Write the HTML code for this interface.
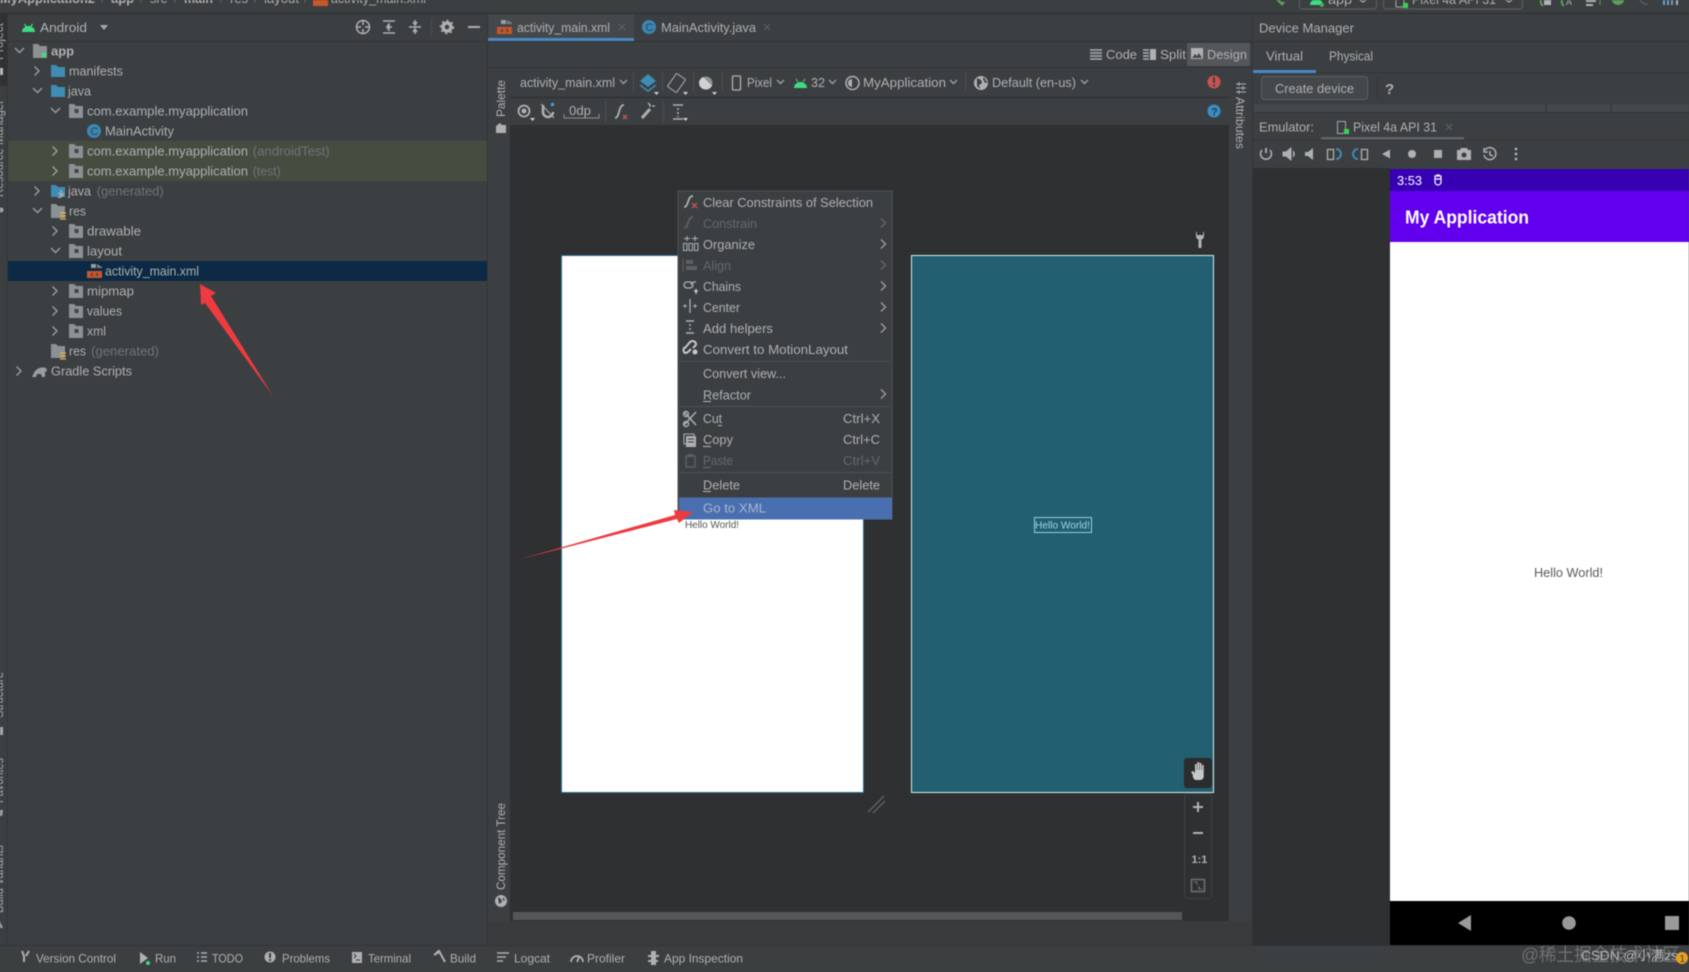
<!DOCTYPE html>
<html lang="en"><head><meta charset="utf-8"><title>Android Studio</title>
<style>
html,body{margin:0;padding:0;background:#3c3f41;width:1689px;height:972px;overflow:hidden}
svg{display:block;filter:blur(.45px)}
text{font-family:"Liberation Sans","Noto Sans CJK SC",sans-serif;font-size:13px;fill:#aeb0b2}
.d{fill:#66696b}.g{fill:#70737a}.b{font-weight:bold}
.c{fill:none;stroke:#9b9d9f;stroke-width:1.4}
.i{fill:none;stroke:#aeb0b2;stroke-width:1.5}
.s{stroke:#323436;stroke-width:1}
</style></head><body>
<svg width="1689" height="972" viewBox="0 0 1689 972" xmlns="http://www.w3.org/2000/svg">
<defs>
<path id="cr" d="M0-4.500l4.500 4.500-4.500 4.500" class="c"/>
<path id="cd" d="M-4.500-2l4.500 4.500 4.500-4.500" class="c"/>
<g id="pk"><path d="M0 0h5l2 2h7v12H0z" fill="#8c9193"/><rect x="5.500" y="5" width="4" height="4" fill="#44474a"/></g>
<g id="bf"><path d="M0 0h5l2 2h7v10H0z" fill="#3f8cb4"/></g>
<g id="gf"><path d="M0 0h5l2 2h7v12H0z" fill="#8c9193"/></g>
<g id="ci"><circle cx="7" cy="7" r="7" fill="#3d86b0"/><text x="3.500" y="11" style="font-size:11px;fill:#1f4a63">C</text></g>
<g id="xm"><path d="M4 0h5v4H4z" fill="#9a9d9f"/><path d="M10 0v4h5v-1z" fill="#7c7f81"/><rect y="7" width="15" height="7" fill="#c8572b"/><path d="M6 9l-2 1.500 2 1.500M9 9l2 1.500-2 1.500" stroke="#3c3f41" fill="none"/></g>
<g id="an"><path d="M0 9a6.500 6 0 0 1 13 0z" fill="#3ddc84"/><path d="M2.500 1l2 3M10.500 1l-2 3" stroke="#3ddc84" stroke-width="1.200"/></g>
</defs>

<rect width="1689" height="972" fill="#3c3f41"/>

<!-- breadcrumbs -->
<rect y="13" width="1689" height="1" fill="#2b2d2e"/>
<text x="0" y="3" class="b" textLength="95" lengthAdjust="spacingAndGlyphs">MyApplication2</text>
<text x="101" y="3" class="d">/</text>
<text x="111" y="3" class="b" textLength="23" lengthAdjust="spacingAndGlyphs">app</text>
<text x="140" y="3" class="d">/</text>
<text x="150" y="3" textLength="17" lengthAdjust="spacingAndGlyphs">src</text>
<text x="174" y="3" class="d">/</text>
<text x="184" y="3" class="b" textLength="29" lengthAdjust="spacingAndGlyphs">main</text>
<text x="220" y="3" class="d">/</text>
<text x="230" y="3" textLength="18" lengthAdjust="spacingAndGlyphs">res</text>
<text x="254" y="3" class="d">/</text>
<text x="264" y="3" textLength="35" lengthAdjust="spacingAndGlyphs">layout</text>
<text x="304" y="3" class="d">/</text>
<rect x="313" y="0" width="15" height="6" fill="#c8572b"/>
<text x="331" y="3" textLength="95" lengthAdjust="spacingAndGlyphs">activity_main.xml</text>

<!-- top-right run toolbar -->
<path d="M1276-2l6 6 2-2" stroke="#5c9e5c" stroke-width="2.500" fill="none"/>
<rect x="1299.500" y="-8" width="77" height="17" rx="3" fill="none" stroke="#5e6163"/>
<path d="M1310 5a6.500 6 0 0 1 13 0z" fill="#3ddc84"/><circle cx="1322" cy="5" r="2" fill="#4caf50"/>
<text x="1328" y="4" textLength="24" lengthAdjust="spacingAndGlyphs">app</text>
<path d="M1360 0l3 2 3-2" class="c"/>
<rect x="1383.500" y="-8" width="139" height="17" rx="3" fill="none" stroke="#5e6163"/>
<rect x="1396" y="-4" width="8" height="11" fill="none" stroke="#a5a7a9"/><rect x="1403" y="3" width="5" height="5" fill="#39d353"/>
<text x="1412" y="4" textLength="84" lengthAdjust="spacingAndGlyphs">Pixel 4a API 31</text>
<path d="M1506 0l3 2 3-2" class="c"/>
<path d="M1541 0a6 6 0 0 0 2 6" stroke="#5c9e5c" stroke-width="2" fill="none"/><rect x="1544" y="0" width="7" height="5" fill="#b0b2b4"/>
<path d="M1562 0a6 6 0 0 0 2 6" stroke="#5c9e5c" stroke-width="2" fill="none"/><text x="1566" y="5" style="font-size:9px">A</text>
<path d="M1586 1h10M1586 5h7" stroke="#b0b2b4" stroke-width="2"/>
<path d="M1600 0l0 5" stroke="#5c9e5c"/>
<ellipse cx="1618" cy="0" rx="6" ry="5" fill="#5c9e5c"/>
<path d="M1640 0l4 4h4" stroke="#55585a" stroke-width="2" fill="none"/>
<path d="M1664 0v5M1668 0v5M1672 0v5" stroke="#6b9dc9" stroke-width="2"/><path d="M1677 0v5" stroke="#b0b2b4" stroke-width="2"/>

<!-- left strip -->
<rect x="0" y="14" width="8" height="72" fill="#2f3133"/>
<rect x="7" y="14" width="1" height="931" fill="#343638"/>
<clipPath id="lc"><rect width="7" height="972"/></clipPath>
<g clip-path="url(#lc)">
<text transform="translate(3 60) rotate(-90)" textLength="37" lengthAdjust="spacingAndGlyphs" style="font-size:12px">Project</text>
<rect x="0" y="68" width="3" height="7" fill="#b8babc"/>
<text transform="translate(3 197) rotate(-90)" textLength="97" lengthAdjust="spacingAndGlyphs" style="font-size:12px">Resource Manager</text>
<circle cx="1" cy="210" r="2.500" fill="#a5a7a9"/>
<text transform="translate(3 718) rotate(-90)" textLength="46" lengthAdjust="spacingAndGlyphs" style="font-size:12px">Structure</text>
<rect x="0" y="727" width="3" height="8" fill="#a5a7a9"/>
<text transform="translate(3 803) rotate(-90)" textLength="45" lengthAdjust="spacingAndGlyphs" style="font-size:12px">Favorites</text>
<path d="M0 810h3l-1 6H0z" fill="#a5a7a9"/>
<text transform="translate(3 913) rotate(-90)" textLength="68" lengthAdjust="spacingAndGlyphs" style="font-size:12px">Build Variants</text>
<path d="M0 921l3 7H0z" fill="#a5a7a9"/>
</g>

<!-- project header -->
<rect x="8" y="41" width="480" height="1" fill="#323436"/>
<use href="#an" x="22" y="23"/>
<text x="40" y="32" textLength="47" lengthAdjust="spacingAndGlyphs">Android</text>
<path d="M100 25h8l-4 5z" fill="#a5a7a9"/>
<circle cx="363" cy="27" r="6.500" class="i"/><path d="M363 20v5M363 29v5M356 27h5M365 27h5" class="i"/>
<path d="M383 21h12M383 33h12M389 23v3l-2-1M389 31v-3l-2 1M386 27h6" class="i"/>
<path d="M409 27h12M415 20v4M415 30v4M413 22l2 3 2-3M413 32l2-3 2 3" class="i"/>
<rect x="431" y="19" width="1" height="17" fill="#4d5052"/>
<circle cx="447" cy="27" r="4" fill="none" stroke="#aeb0b2" stroke-width="3.500"/><circle cx="447" cy="27" r="6.500" fill="none" stroke="#aeb0b2" stroke-width="1.500" stroke-dasharray="2 3"/>
<rect x="468" y="26" width="12" height="2" fill="#aeb0b2"/>
<rect x="487" y="14" width="1" height="931" fill="#323436"/>

<!-- tree -->
<rect x="8" y="141" width="479" height="40" fill="#454d40"/>
<rect x="8" y="261" width="479" height="20" fill="#0c2a45"/>

<use href="#cd" x="19.500" y="50"/>
<use href="#gf" x="33" y="44"/><circle cx="44" cy="55" r="2.500" fill="#3ddc84"/>
<text x="51" y="55.500" class="b" textLength="23" lengthAdjust="spacingAndGlyphs">app</text>

<use href="#cr" x="34.500" y="71"/><use href="#bf" x="51" y="65"/>
<text x="69" y="75.500" textLength="54" lengthAdjust="spacingAndGlyphs">manifests</text>

<use href="#cd" x="37.500" y="90"/><use href="#bf" x="51" y="85"/>
<text x="68" y="95.500" textLength="23" lengthAdjust="spacingAndGlyphs">java</text>

<use href="#cd" x="55.500" y="110"/><use href="#pk" x="69" y="104"/>
<text x="87" y="115.500" textLength="161" lengthAdjust="spacingAndGlyphs">com.example.myapplication</text>

<use href="#ci" x="87" y="124"/>
<text x="105" y="135.500" textLength="69" lengthAdjust="spacingAndGlyphs">MainActivity</text>

<use href="#cr" x="52.500" y="151"/><use href="#pk" x="69" y="144"/>
<text x="87" y="155.500" textLength="161" lengthAdjust="spacingAndGlyphs">com.example.myapplication</text>
<text x="252.700" y="155.500" class="g" textLength="77" lengthAdjust="spacingAndGlyphs">(androidTest)</text>

<use href="#cr" x="52.500" y="171"/><use href="#pk" x="69" y="164"/>
<text x="87" y="175.500" textLength="161" lengthAdjust="spacingAndGlyphs">com.example.myapplication</text>
<text x="252.700" y="175.500" class="g" textLength="28" lengthAdjust="spacingAndGlyphs">(test)</text>

<use href="#cr" x="34.500" y="191"/><use href="#bf" x="51" y="185"/>
<path d="M58 193l6 3M61 190l0 8M58 198l6-5" stroke="#b0b2b4" stroke-width="1.200"/>
<text x="68" y="195.500" textLength="23" lengthAdjust="spacingAndGlyphs">java</text>
<text x="96.700" y="195.500" class="g" textLength="67" lengthAdjust="spacingAndGlyphs">(generated)</text>

<use href="#cd" x="37.500" y="210"/><use href="#gf" x="51" y="204"/>
<path d="M60 213h6M60 216h6M60 219h6" stroke="#d8b44a" stroke-width="1.200"/>
<text x="69" y="215.500" textLength="17" lengthAdjust="spacingAndGlyphs">res</text>

<use href="#cr" x="52.500" y="231"/><use href="#pk" x="69" y="224"/>
<text x="87" y="235.500" textLength="54" lengthAdjust="spacingAndGlyphs">drawable</text>

<use href="#cd" x="55.500" y="250"/><use href="#pk" x="69" y="244"/>
<text x="87" y="255.500" textLength="35" lengthAdjust="spacingAndGlyphs">layout</text>

<use href="#xm" x="87" y="264"/>
<text x="105" y="275.500" textLength="94" lengthAdjust="spacingAndGlyphs">activity_main.xml</text>

<use href="#cr" x="52.500" y="291"/><use href="#pk" x="69" y="284"/>
<text x="87" y="295.500" textLength="47" lengthAdjust="spacingAndGlyphs">mipmap</text>

<use href="#cr" x="52.500" y="311"/><use href="#pk" x="69" y="304"/>
<text x="87" y="315.500" textLength="35" lengthAdjust="spacingAndGlyphs">values</text>

<use href="#cr" x="52.500" y="331"/><use href="#pk" x="69" y="324"/>
<text x="87" y="335.500" textLength="19" lengthAdjust="spacingAndGlyphs">xml</text>

<use href="#gf" x="51" y="344"/>
<path d="M60 353h6M60 356h6M60 359h6" stroke="#d8b44a" stroke-width="1.200"/>
<text x="69" y="355.500" textLength="17" lengthAdjust="spacingAndGlyphs">res</text>
<text x="91" y="355.500" class="g" textLength="68" lengthAdjust="spacingAndGlyphs">(generated)</text>

<use href="#cr" x="16.500" y="371"/>
<path d="M32 377l3-6q5-5 11-3l1 3-2 1v5h-3l-1-3h-4l-1 3z" fill="#9a9d9f"/>
<text x="51" y="375.500" textLength="81" lengthAdjust="spacingAndGlyphs">Gradle Scripts</text>

<!-- editor tabs -->
<rect x="488" y="14" width="146" height="27" fill="#45484a"/>
<rect x="488" y="38" width="146" height="3" fill="#4a88c7"/>
<rect x="488" y="41" width="765" height="1" fill="#323436"/>
<use href="#xm" x="497" y="20"/>
<text x="517" y="32" textLength="93" lengthAdjust="spacingAndGlyphs">activity_main.xml</text>
<path d="M619 24l6 6M625 24l-6 6" stroke="#5f6264"/>
<use href="#ci" x="642" y="20"/>
<text x="661" y="32" textLength="95" lengthAdjust="spacingAndGlyphs">MainActivity.java</text>
<path d="M764 24l6 6M770 24l-6 6" stroke="#5f6264"/>

<!-- code/split/design -->
<path d="M1090 50h12M1090 53h12M1090 56h12M1090 59h12" stroke="#aeb0b2" stroke-width="1.500"/>
<text x="1106" y="59" textLength="31" lengthAdjust="spacingAndGlyphs">Code</text>
<path d="M1143 50h6M1143 53h6M1143 56h6M1143 59h6" stroke="#aeb0b2" stroke-width="1.500"/><rect x="1150" y="49" width="6" height="11" fill="#aeb0b2"/>
<text x="1160" y="59" textLength="26" lengthAdjust="spacingAndGlyphs">Split</text>
<rect x="1187" y="43" width="63" height="23" rx="2" fill="#54575a"/>
<rect x="1191" y="48" width="12" height="11" fill="#aeb0b2"/><path d="M1192 58l3-4 2 2 2-3 3 5z" fill="#45484a"/>
<text x="1207" y="59" textLength="40" lengthAdjust="spacingAndGlyphs">Design</text>
<rect x="488" y="67" width="765" height="1" fill="#323436"/>

<!-- palette strip -->
<text transform="translate(505 117) rotate(-90)" textLength="37" lengthAdjust="spacingAndGlyphs" style="font-size:12px">Palette</text>
<path d="M496 133v-7l4-3 2 2h4v8z" fill="#aeb0b2"/>

<!-- toolbars -->
<rect x="510" y="68" width="719" height="29" fill="#3c3f41"/>
<rect x="510" y="97" width="719" height="1" fill="#2b2d2e"/>
<rect x="510" y="98" width="719" height="27" fill="#3c3f41"/>
<text x="520" y="87" textLength="95" lengthAdjust="spacingAndGlyphs">activity_main.xml</text>
<path d="M620 80l3.500 3.500 3.500-3.500" class="c"/>
<rect x="633" y="72" width="1" height="20" fill="#4d5052"/>
<path d="M640 81l8-7 8 7-8 6z" fill="#3f8cb4"/><path d="M640 85l8 6 8-6" fill="none" stroke="#3f8cb4" stroke-width="1.500"/>
<path d="M654 92h5l-2.500 3z" fill="#cfd1d3"/>
<rect x="662" y="72" width="1" height="20" fill="#4d5052"/>
<rect x="671" y="75" width="11" height="16" rx="1" transform="rotate(35 676.500 83)" fill="none" stroke="#aeb0b2" stroke-width="1"/>
<path d="M683 92h5l-2.500 3z" fill="#cfd1d3"/>
<rect x="693" y="72" width="1" height="20" fill="#4d5052"/>
<circle cx="706" cy="83" r="6.500" fill="#8f9294"/><path d="M703 77a6.500 6.500 0 0 0 3 12.500 6 6 0 0 0 6-4z" fill="#cfd1d3"/>
<path d="M712 92h5l-2.500 3z" fill="#cfd1d3"/>
<rect x="722" y="72" width="1" height="20" fill="#4d5052"/>
<rect x="732.500" y="76" width="8" height="14" rx="1" fill="none" stroke="#aeb0b2" stroke-width="1.300"/>
<text x="747" y="87" textLength="25" lengthAdjust="spacingAndGlyphs">Pixel</text>
<path d="M777 80l3.500 3.500 3.500-3.500" class="c"/>
<path d="M794 88a6.500 6 0 0 1 13 0z" fill="#3ddc84"/><path d="M796 79l2 3M805 79l-2 3" stroke="#3ddc84"/>
<text x="811" y="87" textLength="14" lengthAdjust="spacingAndGlyphs">32</text>
<path d="M829 80l3.500 3.500 3.500-3.500" class="c"/>
<circle cx="852.500" cy="83" r="6.500" class="i"/><path d="M852 79a4 4 0 0 0 0 8z" fill="#aeb0b2"/>
<text x="863" y="87" textLength="83" lengthAdjust="spacingAndGlyphs">MyApplication</text>
<path d="M950 80l3.500 3.500 3.500-3.500" class="c"/>
<rect x="965" y="72" width="1" height="20" fill="#4d5052"/>
<circle cx="981" cy="83" r="7" fill="#aeb0b2"/><path d="M977 78l4 2 1 3-3 2 1 4-3-3zM984 77l2 4 2 1-3 1-2-4z" fill="#3c3f41"/>
<text x="992" y="87" textLength="84" lengthAdjust="spacingAndGlyphs">Default (en-us)</text>
<path d="M1081 80l3.500 3.500 3.500-3.500" class="c"/>
<circle cx="1214" cy="82" r="6.500" fill="#c75450"/><rect x="1213" y="77" width="2" height="6" fill="#3c3f41"/><rect x="1213" y="84.500" width="2" height="2" fill="#3c3f41"/>

<circle cx="524" cy="111" r="5.500" fill="none" stroke="#aeb0b2" stroke-width="1.800"/><circle cx="524" cy="111" r="2.500" fill="#aeb0b2"/><path d="M530 118h5l-2.500 3z" fill="#cfd1d3"/>
<path d="M543 105v7a5 5 0 0 0 10 0" fill="none" stroke="#aeb0b2" stroke-width="2.500"/><path d="M541 104l13 14" stroke="#aeb0b2"/><rect x="551" y="103" width="3" height="3" fill="#4a9fd4"/>
<text x="569" y="115" textLength="22" lengthAdjust="spacingAndGlyphs">0dp</text>
<path d="M564 114v4h35v-4" fill="none" stroke="#8d9092"/>
<rect x="605" y="102" width="1" height="20" fill="#4d5052"/>
<path d="M615 118c5 0 3-13 9-13" fill="none" stroke="#aeb0b2" stroke-width="1.800"/><path d="M623 115l4 4M627 115l-4 4" stroke="#c75450" stroke-width="1.300"/>
<path d="M642 118l8-9" stroke="#aeb0b2" stroke-width="3"/><path d="M650 104v3M652 106h3M648 103l2 2" stroke="#cfd1d3"/>
<rect x="663" y="102" width="1" height="20" fill="#4d5052"/>
<path d="M673 105h10M673 119h10M678 108v2M678 112v2M678 116v1" stroke="#aeb0b2" stroke-width="1.600"/>
<path d="M683 118h5l-2.500 3z" fill="#cfd1d3"/>
<circle cx="1214" cy="111" r="6.500" fill="#3b8ec4"/><text x="1211" y="115.500" style="font-size:11px;fill:#1c3d55" class="b">?</text>

<!-- canvas -->
<rect x="510" y="125" width="719" height="796" fill="#2e3032"/>
<rect x="488" y="921" width="765" height="24" fill="#393b3d"/>
<rect x="1230" y="68" width="22" height="853" fill="#3c3f41"/>
<rect x="1252" y="14" width="1" height="931" fill="#323436"/>

<!-- component tree label -->
<text transform="translate(505 890) rotate(-90)" textLength="87" lengthAdjust="spacingAndGlyphs" style="font-size:12px">Component Tree</text>
<circle cx="501" cy="901" r="6" fill="#aeb0b2"/><path d="M498 897l3 2 1 3-3 2zM503 897l2 3-2 1z" fill="#3c3f41"/>

<!-- attributes strip -->
<path d="M1236 84h10M1236 88h10M1236 92h10" stroke="#aeb0b2"/><path d="M1239 82v4M1243 86v4M1239 90v4" stroke="#aeb0b2"/>
<text transform="translate(1236 97) rotate(90)" textLength="52" lengthAdjust="spacingAndGlyphs" style="font-size:12px">Attributes</text>

<!-- design surface -->
<rect x="561.500" y="255.500" width="302" height="537" fill="#fff" stroke="#2a6f95"/>
<text x="685" y="528" style="font-size:10.500px;fill:#555" textLength="54" lengthAdjust="spacingAndGlyphs">Hello World!</text>
<path d="M868 812l16-16M873 813l12-12" stroke="#6f7274"/>

<rect x="911.500" y="255.500" width="302" height="537" fill="#225f71" stroke="#d6eef0"/>
<rect x="1034.500" y="517.500" width="57" height="15" fill="none" stroke="#8ed0de"/>
<text x="1035" y="528.500" style="font-size:10.500px;fill:#9cd6e2" textLength="55" lengthAdjust="spacingAndGlyphs">Hello World!</text>
<path d="M1196 232v4a4 4 0 0 0 8 0v-4l-1 0v3h-6v-3zM1198.500 240h3v8h-3z" fill="#b0b2b4"/>

<rect x="1184" y="758" width="28" height="30" rx="3" fill="#2a2c2d"/>
<path d="M1193 775l-2-3 2-1 2 2v-9h1.800v6h.5v-8h1.800v8h.5v-7h1.800v7h.5v-5h1.800v11q0 4-4 4h-4q-2 0-3-4z" fill="#c6c8ca"/>
<rect x="1184.500" y="793.500" width="27" height="105" rx="3" fill="#2e3032" stroke="#3f4244"/>
<path d="M1198 802v10M1193 807h10" stroke="#b0b2b4" stroke-width="2"/>
<path d="M1193 833h10" stroke="#b0b2b4" stroke-width="2"/>
<text x="1191.500" y="863" class="b" style="font-size:11px;fill:#b0b2b4">1:1</text>
<rect x="1191.500" y="879.500" width="13" height="12" fill="none" stroke="#6f7274" stroke-width="1.500"/><path d="M1194 882h3v3M1202 889h-3v-3" stroke="#6f7274" fill="none"/>
<rect x="513" y="912" width="669" height="8" fill="#54575a"/>

<!-- context menu -->
<rect x="678" y="191" width="214" height="328" fill="#3c3f41" stroke="#505355"/>
<rect x="679" y="497.500" width="213" height="22" fill="#4a6fb0"/>
<rect x="679" y="361" width="212" height="1" fill="#4f5254"/>
<rect x="679" y="406" width="212" height="1" fill="#4f5254"/>
<rect x="679" y="472" width="212" height="1" fill="#4f5254"/>

<path d="M684 207c5 0 3-11 9-11" fill="none" stroke="#aeb0b2" stroke-width="1.800"/><path d="M692 203l5 5M697 203l-5 5" stroke="#c75450" stroke-width="1.300"/>
<text x="703" y="207" textLength="170" lengthAdjust="spacingAndGlyphs">Clear Constraints of Selection</text>

<path d="M684 228c5 0 3-11 9-11" fill="none" stroke="#5e6163" stroke-width="1.800"/>
<text x="703" y="228" class="d" textLength="54" lengthAdjust="spacingAndGlyphs">Constrain</text>
<use href="#cr" x="881" y="223" style="opacity:.4"/>

<path d="M684 238.500h6M687 236v5M692 238.500h6M695 236v5" stroke="#aeb0b2"/><rect x="683.500" y="243.500" width="3.500" height="7" fill="none" stroke="#aeb0b2"/><rect x="689" y="243.500" width="3.500" height="7" fill="none" stroke="#aeb0b2"/><rect x="694.500" y="243.500" width="3.500" height="7" fill="none" stroke="#aeb0b2"/>
<text x="703" y="249" textLength="52" lengthAdjust="spacingAndGlyphs">Organize</text>
<use href="#cr" x="881" y="244"/>

<path d="M683 259v13" stroke="#5e6163"/><rect x="686" y="260" width="7" height="4" fill="#5e6163"/><rect x="686" y="266" width="11" height="4" fill="#5e6163"/>
<text x="703" y="270" class="d" textLength="28" lengthAdjust="spacingAndGlyphs">Align</text>
<use href="#cr" x="881" y="265" style="opacity:.4"/>

<path d="M684 285a3 3 0 0 1 3-3h3a3 3 0 0 1 0 6h-3a3 3 0 0 1-3-3zM691 285a3 3 0 0 1 3-3h2" fill="none" stroke="#aeb0b2" stroke-width="1.300"/><path d="M694 291h4M696 289v5" stroke="#cfd1d3" stroke-width="1.300"/>
<text x="703" y="291" textLength="38" lengthAdjust="spacingAndGlyphs">Chains</text>
<use href="#cr" x="881" y="286"/>

<path d="M690 299v14" stroke="#aeb0b2" stroke-width="1.300"/><path d="M683 306h4M693 306h4M685 304v4M695 304v4" stroke="#aeb0b2"/>
<text x="703" y="312" textLength="37" lengthAdjust="spacingAndGlyphs">Center</text>
<use href="#cr" x="881" y="307"/>

<path d="M686 321h8M686 333h8M690 324v2M690 328v2" stroke="#aeb0b2" stroke-width="1.500"/>
<text x="703" y="333" textLength="70" lengthAdjust="spacingAndGlyphs">Add helpers</text>
<use href="#cr" x="881" y="328"/>

<path d="M685 348l5-6q3-2 5 0t0 4l-2 2M691 349l-3 3q-3 2-4 0t0-4l2-1" fill="none" stroke="#c6c8ca" stroke-width="2"/><circle cx="695" cy="352" r="2.500" fill="#c6c8ca"/>
<text x="703" y="354" textLength="145" lengthAdjust="spacingAndGlyphs">Convert to MotionLayout</text>

<text x="703" y="378" textLength="83" lengthAdjust="spacingAndGlyphs">Convert view...</text>
<text x="703" y="399.500" textLength="48" lengthAdjust="spacingAndGlyphs">Refactor</text>
<rect x="703" y="401" width="8" height="1" fill="#b4b6b8"/>
<use href="#cr" x="881" y="394"/>

<path d="M684 412l12 13M696 412l-12 13" stroke="#aeb0b2" stroke-width="1.500"/><circle cx="686" cy="424" r="2.500" fill="none" stroke="#aeb0b2" stroke-width="1.400"/><circle cx="686" cy="414" r="2.500" fill="none" stroke="#aeb0b2" stroke-width="1.400"/>
<text x="703" y="423" textLength="19" lengthAdjust="spacingAndGlyphs">Cut</text>
<rect x="718" y="425" width="4" height="1" fill="#b4b6b8"/>
<text x="843" y="423" textLength="37" lengthAdjust="spacingAndGlyphs">Ctrl+X</text>

<rect x="684" y="434" width="10" height="10" fill="none" stroke="#aeb0b2"/><rect x="686" y="436" width="10" height="11" fill="#aeb0b2"/><path d="M688 439h6M688 442h6" stroke="#3c3f41"/>
<text x="703" y="444" textLength="30" lengthAdjust="spacingAndGlyphs">Copy</text>
<rect x="703" y="446" width="8" height="1" fill="#b4b6b8"/>
<text x="843" y="444" textLength="37" lengthAdjust="spacingAndGlyphs">Ctrl+C</text>

<rect x="686" y="456" width="9" height="11" fill="none" stroke="#5e6163" stroke-width="1.400"/><rect x="688" y="454" width="5" height="3" fill="#5e6163"/>
<text x="703" y="465" class="d" textLength="30" lengthAdjust="spacingAndGlyphs">Paste</text>
<rect x="703" y="467" width="8" height="1" fill="#6b6e70"/>
<text x="843" y="465" class="d" textLength="37" lengthAdjust="spacingAndGlyphs">Ctrl+V</text>

<text x="703" y="489.500" textLength="37" lengthAdjust="spacingAndGlyphs">Delete</text>
<rect x="703" y="491" width="8" height="1" fill="#b4b6b8"/>
<text x="843" y="489.500" textLength="37" lengthAdjust="spacingAndGlyphs">Delete</text>
<text x="703" y="512.500" textLength="63" lengthAdjust="spacingAndGlyphs" style="fill:#a8b6cf">Go to XML</text>

<!-- red arrows -->
<path d="M200 284l16 9-5 3 62 100-68-93-4 2z" fill="#ee3b3f"/>
<path d="M517 560l158-45-1-5 19 2-14 11-2-4z" fill="#ee3b3f"/>

<!-- device manager -->
<rect x="1253" y="14" width="436" height="27" fill="#3c3f41"/>
<text x="1259" y="32.500" textLength="95" lengthAdjust="spacingAndGlyphs">Device Manager</text>
<rect x="1253" y="41" width="436" height="1" fill="#323436"/>
<text x="1266" y="60.500" textLength="37" lengthAdjust="spacingAndGlyphs">Virtual</text>
<text x="1329" y="60.500" textLength="44" lengthAdjust="spacingAndGlyphs">Physical</text>
<rect x="1253" y="72" width="436" height="1" fill="#323436"/>
<rect x="1253" y="70" width="63" height="3" fill="#4a88c7"/>
<rect x="1261.500" y="76.500" width="106" height="23" rx="3" fill="#45484a" stroke="#5e6163"/>
<text x="1275" y="93" textLength="79" lengthAdjust="spacingAndGlyphs">Create device</text>
<rect x="1377" y="78" width="1" height="20" fill="#323436"/>
<text x="1385" y="94" class="b" style="font-size:15px">?</text>
<rect x="1254" y="104" width="435" height="8" fill="#45484a"/>
<path d="M1546 104v8M1611 104v8" stroke="#323436"/>
<rect x="1253" y="112" width="436" height="1" fill="#323436"/>
<text x="1259" y="131.500" textLength="55" lengthAdjust="spacingAndGlyphs">Emulator:</text>
<rect x="1337.500" y="121.500" width="8" height="12" fill="none" stroke="#a5a7a9"/><rect x="1344" y="129" width="5" height="5" fill="#39d353"/>
<text x="1353" y="131.500" textLength="84" lengthAdjust="spacingAndGlyphs">Pixel 4a API 31</text>
<path d="M1446 124l6 6M1452 124l-6 6" stroke="#5f6264"/>
<rect x="1321" y="137" width="143" height="3" fill="#626567"/>
<rect x="1253" y="139.500" width="436" height="1" fill="#323436"/>

<path d="M1266 148v5" stroke="#aeb0b2" stroke-width="1.800"/><path d="M1262 150a5.500 5.500 0 1 0 8 0" class="i"/>
<path d="M1283 152h3l5-4v12l-5-4h-3zM1293 151a4 4 0 0 1 0 6" fill="#aeb0b2" stroke="#aeb0b2"/>
<path d="M1305 152h3l5-4v12l-5-4h-3z" fill="#aeb0b2"/>
<rect x="1327.500" y="149.500" width="6" height="10" fill="none" stroke="#aeb0b2" stroke-width="1.300"/><path d="M1336 149a5 5 0 0 1 0 10" fill="none" stroke="#3f8cb4" stroke-width="2"/>
<rect x="1361.500" y="149.500" width="6" height="10" fill="none" stroke="#aeb0b2" stroke-width="1.300"/><path d="M1358 149a5 5 0 0 0 0 10" fill="none" stroke="#3f8cb4" stroke-width="2"/>
<path d="M1382 154l8-4.500v9z" fill="#aeb0b2"/>
<circle cx="1412" cy="154" r="4" fill="#aeb0b2"/>
<rect x="1434" y="150" width="8" height="8" fill="#aeb0b2"/>
<path d="M1457 150h3l1-2h6l1 2h3v10h-14z" fill="#aeb0b2"/><circle cx="1464" cy="155" r="2.500" fill="#3c3f41"/>
<path d="M1485 150a6 6 0 1 1-1 5" class="i"/><path d="M1484 148v4h4M1490 151v4l3 1" class="i"/>
<circle cx="1516" cy="149" r="1.400" fill="#aeb0b2"/><circle cx="1516" cy="154" r="1.400" fill="#aeb0b2"/><circle cx="1516" cy="159" r="1.400" fill="#aeb0b2"/>

<rect x="1253" y="168" width="137" height="777" fill="#2e3032"/>

<!-- phone -->
<rect x="1390" y="169" width="299" height="22" fill="#3700b3"/>
<rect x="1390" y="191" width="299" height="51" fill="#6200ee"/>
<rect x="1390" y="242" width="299" height="659" fill="#fff"/>
<rect x="1390" y="901" width="299" height="44" fill="#000"/>
<text x="1397" y="185" style="fill:#fff" textLength="25" lengthAdjust="spacingAndGlyphs">3:53</text>
<path d="M1435 176h6v6a3 3 0 0 1-6 0zM1435 179h6M1437 176v-1h2v1" fill="none" stroke="#fff" stroke-width="1.200"/>
<text x="1405" y="223.500" class="b" style="font-size:18px;fill:#fff" textLength="124" lengthAdjust="spacingAndGlyphs">My Application</text>
<text x="1534" y="577" style="fill:#5a5a5a" textLength="69" lengthAdjust="spacingAndGlyphs">Hello World!</text>
<path d="M1471 915v16l-13-8z" fill="#999"/>
<circle cx="1569" cy="923" r="6.800" fill="#999"/>
<rect x="1665" y="916" width="14" height="14" fill="#999"/>

<!-- bottom bar -->
<rect y="945" width="1689" height="1" fill="#323436"/>
<path d="M22 951l2 5v6M29 951l-3 5" stroke="#aeb0b2" stroke-width="2" fill="none"/>
<text x="36" y="962.500" textLength="80" lengthAdjust="spacingAndGlyphs" style="font-size:12px">Version Control</text>
<path d="M140 952l8 6-8 6z" fill="#aeb0b2"/><circle cx="148" cy="963" r="2" fill="#3ddc84"/>
<text x="155" y="962.500" textLength="21" lengthAdjust="spacingAndGlyphs" style="font-size:12px">Run</text>
<path d="M197 953h2M197 957h2M197 961h2M201 953h6M201 957h6M201 961h6" stroke="#aeb0b2" stroke-width="1.400"/>
<text x="212" y="962.500" textLength="31" lengthAdjust="spacingAndGlyphs" style="font-size:12px">TODO</text>
<circle cx="270" cy="957" r="5.500" fill="#aeb0b2"/><rect x="269" y="953" width="2" height="5" fill="#3c3f41"/><rect x="269" y="959" width="2" height="2" fill="#3c3f41"/>
<text x="282" y="962.500" textLength="48" lengthAdjust="spacingAndGlyphs" style="font-size:12px">Problems</text>
<rect x="352" y="952" width="10" height="11" fill="#aeb0b2"/><path d="M354 954l2 2-2 2M356 960h4" stroke="#3c3f41" fill="none"/>
<text x="368" y="962.500" textLength="43" lengthAdjust="spacingAndGlyphs" style="font-size:12px">Terminal</text>
<path d="M436 953l3-2 6 11" stroke="#aeb0b2" stroke-width="2" fill="none"/><path d="M434 955l5-3" stroke="#aeb0b2" stroke-width="2"/>
<text x="450" y="962.500" textLength="26" lengthAdjust="spacingAndGlyphs" style="font-size:12px">Build</text>
<path d="M497 953h12M497 957h9M497 961h6" stroke="#aeb0b2" stroke-width="1.600"/>
<text x="514" y="962.500" textLength="36" lengthAdjust="spacingAndGlyphs" style="font-size:12px">Logcat</text>
<path d="M571 962a6 6 0 0 1 12 0M577 962l2-5" fill="none" stroke="#aeb0b2" stroke-width="1.800"/>
<text x="587" y="962.500" textLength="38" lengthAdjust="spacingAndGlyphs" style="font-size:12px">Profiler</text>
<path d="M651 951h5v4h3v2h-3v3h2v2h-2v3h-5v-3h-3v-2h3v-3h-3v-2h3z" fill="#aeb0b2"/>
<text x="664" y="962.500" textLength="79" lengthAdjust="spacingAndGlyphs" style="font-size:12px">App Inspection</text>

<!-- watermarks -->
<text x="1521" y="961" style="font-size:18px;fill:#6e7173" textLength="159" lengthAdjust="spacingAndGlyphs">@稀土掘金技术社区</text>
<text x="1581" y="960" style="fill:#b4b6b8" textLength="97" lengthAdjust="spacingAndGlyphs">CSDN @小满zs</text>
<circle cx="1682" cy="958" r="6" fill="#e8a020"/><text x="1679.500" y="962" style="font-size:10px;fill:#3c3f41">1</text>
</svg>
</body></html>
